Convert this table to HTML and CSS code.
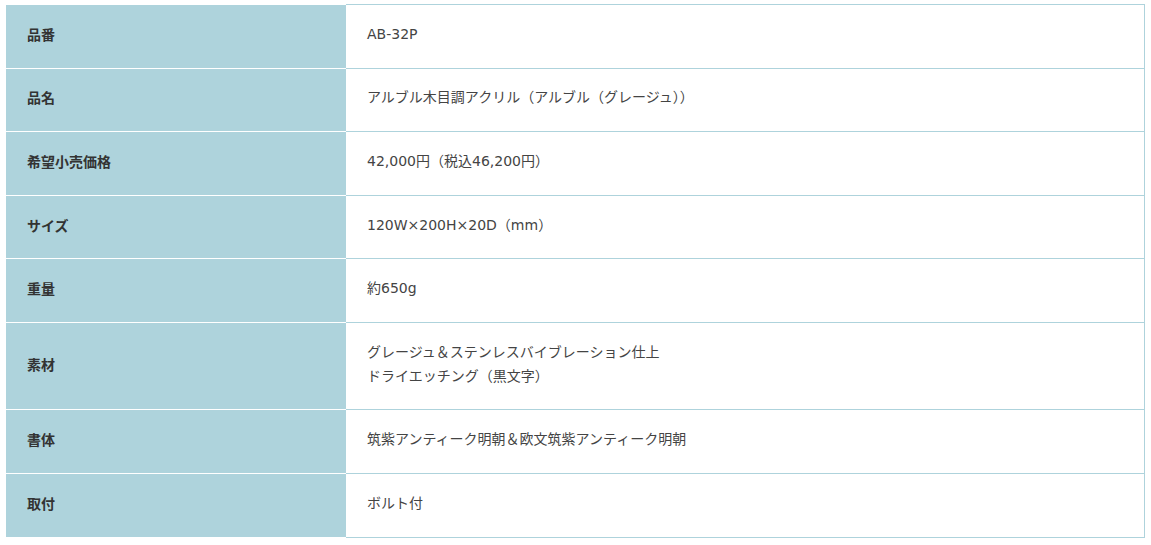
FILE: index.html
```html
<!DOCTYPE html>
<html lang="ja">
<head>
<meta charset="utf-8">
<link rel="stylesheet" href="styles.css">
</head>
<body>
<table class="spec">
  <tr><th>品番</th><td>AB-32P</td></tr>
  <tr><th>品名</th><td>アルブル木目調アクリル（アルブル（グレージュ））</td></tr>
  <tr><th>希望小売価格</th><td>42,000円（税込46,200円）</td></tr>
  <tr><th>サイズ</th><td>120W×200H×20D（mm）</td></tr>
  <tr><th>重量</th><td>約650g</td></tr>
  <tr><th>素材</th><td>グレージュ＆ステンレスバイブレーション仕上<br>ドライエッチング（黒文字）</td></tr>
  <tr><th>書体</th><td>筑紫アンティーク明朝＆欧文筑紫アンティーク明朝</td></tr>
  <tr><th>取付</th><td>ボルト付</td></tr>
</table>
</body>
</html>
```

FILE: styles.css
```css
html, body {
  margin: 0;
  padding: 0;
  background: #fff;
}
body {
  padding: 4px 6px 0 6px;
  font-family: "Noto Sans CJK JP", "Noto Sans", sans-serif;
  font-size: 14px;
  color: #333;
}
.spec {
  width: 1139px;
  border-collapse: collapse;
}
.spec th,
.spec td {
  line-height: 23.8px;
  padding: 17.8px 20px 21px 21px;
  text-align: left;
  vertical-align: middle;
}
.spec th {
  width: 299px;
  background: #aed3dc;
  border-top: 1px solid #fff;
  border-bottom: 1px solid #fff;
  font-weight: bold;
  color: #333;
}
.spec td {
  border: 1px solid #aed3dc;
  border-left: none;
  font-family: "DejaVu Sans", "Noto Sans CJK JP", sans-serif;
  font-weight: normal;
  color: #444;
}
```
